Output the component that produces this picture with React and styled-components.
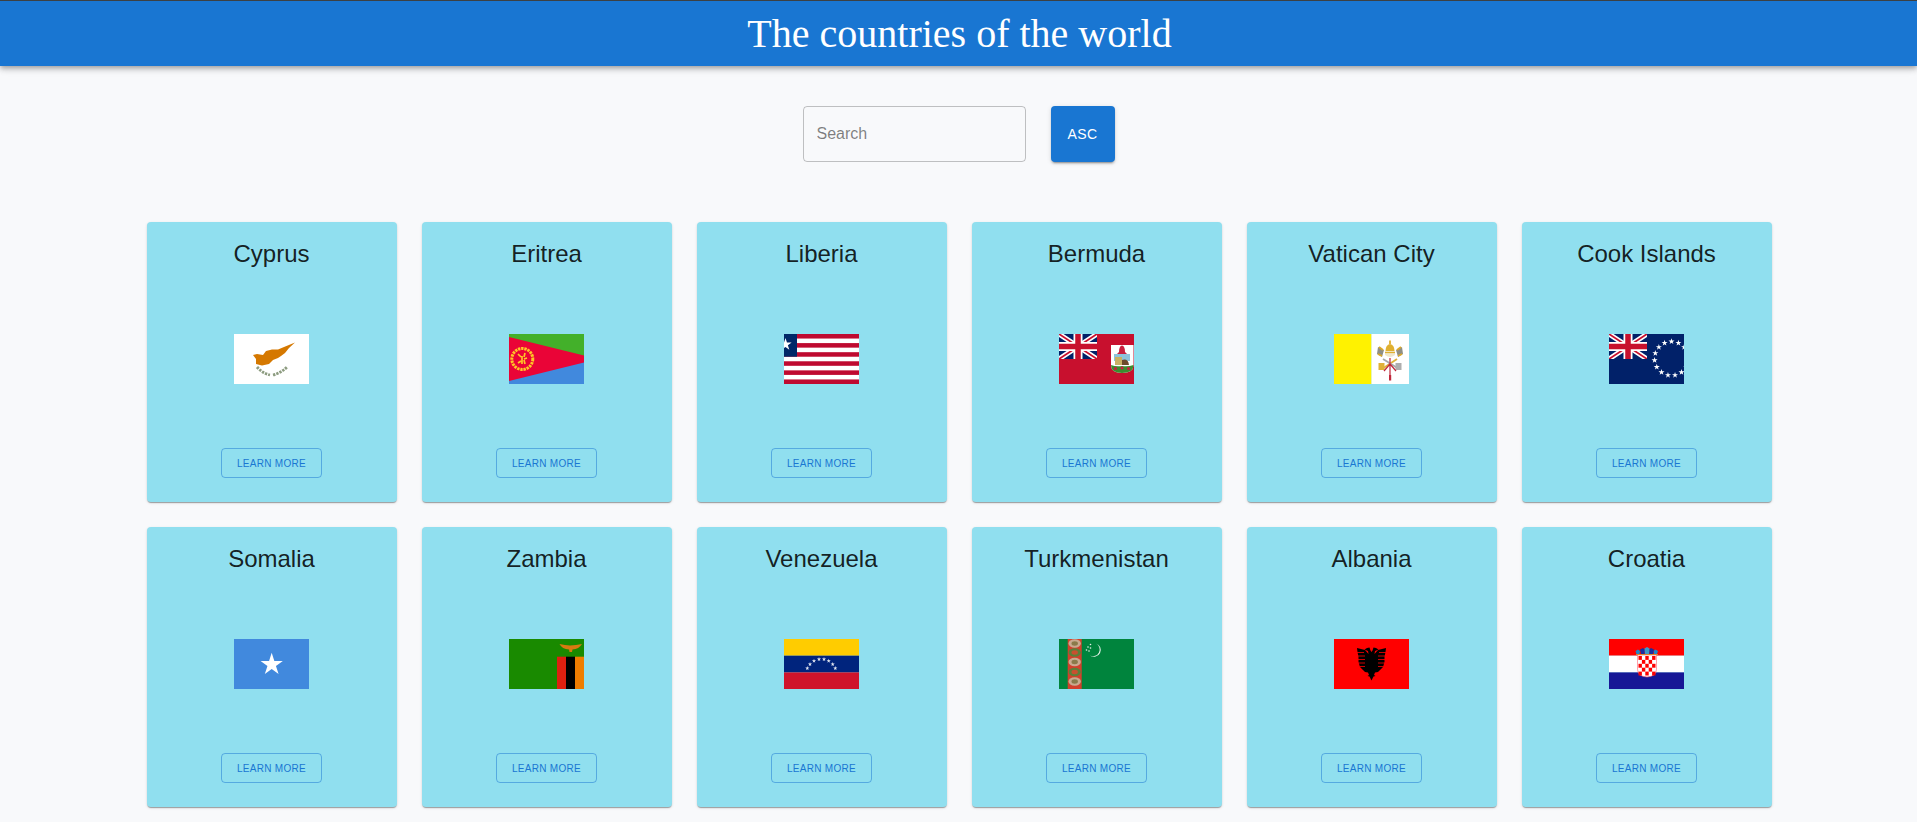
import React from "react";
import styled, { createGlobalStyle } from "styled-components";

//helpers for the flags
function starPoints(cx, cy, r, rot = -90) {
  const pts = [];
  for (let i = 0; i < 10; i++) {
    const rad = i % 2 === 0 ? r : r * 0.382;
    const a = ((rot + i * 36) * Math.PI) / 180;
    pts.push(`${(cx + rad * Math.cos(a)).toFixed(2)},${(cy + rad * Math.sin(a)).toFixed(2)}`);
  }
  return pts.join(" ");
}

function UnionJack() {
  return (
    <svg x="0" y="0" width="38" height="25" viewBox="0 0 38 25">
      <rect width="38" height="25" fill="#012169" />
      <path d="M0 0L38 25M38 0L0 25" stroke="#fff" strokeWidth="5" />
      <path d="M0 0L38 25M38 0L0 25" stroke="#c8102e" strokeWidth="1.8" />
      <path d="M19 0V25M0 12.500H38" stroke="#fff" strokeWidth="9" />
      <path d="M19 0V25M0 12.500H38" stroke="#c8102e" strokeWidth="5.500" />
    </svg>
  );
}

function Cyprus() {
  return (
    <>
      <rect width="75" height="50" fill="#fff" />
      <path
        d="M19 21L23 20L29 21L32 17L38 15.500L44 15.500L50 13L61 8.500L55 14L51 19L47 22L44 24L39 26L35 30L28 31.500L22 30L22 25Z"
        fill="#d57800"
      />
      <path
        d="M23 33Q28 39 36 41M39 41Q47 39 53 33"
        fill="none"
        stroke="#8d9c80"
        strokeWidth="2.800"
        strokeDasharray="2.400 1"
      />
    </>
  );
}

function Eritrea() {
  return (
    <>
      <rect width="75" height="25" fill="#43b02a" />
      <rect y="25" width="75" height="25" fill="#4189dd" />
      <polygon points="0,3 75,21.5 75,28.5 0,47" fill="#ea0437" />
      <circle cx="13.300" cy="25" r="10.500" fill="none" stroke="#ffc726" strokeWidth="3" strokeDasharray="2.400 .8" />
      <path d="M9 20l3 3M16 19l-1 4M18 24l-3 1M9 29l3-2M16 30l-1-4M13 22v8" stroke="#ffc726" strokeWidth="1.700" />
    </>
  );
}

function Liberia() {
  const stripes = Array.from({ length: 6 }, (_, i) => i * 2);
  return (
    <>
      <rect width="75" height="50" fill="#fff" />
      {stripes.map((i) => (
        <rect key={i} y={(i * 50) / 11} width="75" height={50 / 11} fill="#bf0a30" />
      ))}
      <rect width="13" height="22.700" fill="#002868" />
      <polygon points={starPoints(1.500, 10.500, 6.500)} fill="#fff" />
    </>
  );
}

function Bermuda() {
  return (
    <>
      <rect width="75" height="50" fill="#c8102e" />
      <UnionJack />
      <path d="M52 11H74.500V31Q74.500 39 63 39Q52 39 52 31Z" fill="#fff" />
      <path d="M60 18Q60 12 63 11.500Q66 12 66 18L68 20H58Z" fill="#c8203f" />
      <path d="M55 20H71V27H55Z" fill="#8cc4dc" />
      <path d="M56 23H63V31H56Z" fill="#c9b264" />
      <path d="M63 26Q69 24 70 31H63Z" fill="#6d4a2c" />
      <path d="M52 31Q57 33 63 32Q69 33 74.500 31Q74.500 39 63 39Q52 39 52 31Z" fill="#3c8d2f" />
      <circle cx="56.500" cy="34.500" r="1.600" fill="#c8203f" />
      <circle cx="63" cy="34" r="1.600" fill="#c8203f" />
      <circle cx="69.500" cy="34.500" r="1.600" fill="#c8203f" />
    </>
  );
}

function Vatican() {
  return (
    <>
      <rect width="37.500" height="50" fill="#fff200" />
      <rect x="37.500" width="37.500" height="50" fill="#fff" />
      <path d="M51.500 17Q51.500 11 56 10Q60.500 11 60.500 17Z" fill="#e0b030" />
      <path d="M56 6.500V10" stroke="#e0b030" strokeWidth="1.800" />
      <path d="M51 17H61V21Q56 25 51 21Z" fill="#f0e8cc" />
      <path d="M51 18.500H61" stroke="#e0b030" strokeWidth="1.200" />
      <path d="M44 13l6 3-2 7-5-3zM68 13l-6 3 2 7 5-3z" fill="#8f8f86" />
      <path d="M45 13l4 3M67 13l-4 3M44 20l4 2M68 20l-4 2" stroke="#dba92a" strokeWidth="1.800" />
      <path d="M63 25L48 35" stroke="#dfb138" strokeWidth="1.800" />
      <path d="M49 25L65 35" stroke="#a8a8a8" strokeWidth="1.800" />
      <rect x="44.500" y="29" width="6" height="7" fill="#dfb138" />
      <rect x="61.500" y="29" width="6" height="7" fill="#aeaeae" />
      <path d="M56 24V46M56 30L50 37M56 30L62 37" stroke="#c0283c" strokeWidth="1.200" fill="none" />
      <rect x="55" y="41" width="2.200" height="5.500" fill="#c0283c" />
    </>
  );
}

function CookIslands() {
  const stars = Array.from({ length: 15 }, (_, i) => {
    const a = ((i * 24 - 90) * Math.PI) / 180;
    return [62.5 + 17 * Math.cos(a), 24.5 + 17 * Math.sin(a)];
  });
  return (
    <>
      <rect width="75" height="50" fill="#012169" />
      <UnionJack />
      {stars.map(([x, y], i) => (
        <polygon key={i} points={starPoints(x, y, 3.200)} fill="#fff" />
      ))}
    </>
  );
}

function Somalia() {
  return (
    <>
      <rect width="75" height="50" fill="#4189dd" />
      <polygon points={starPoints(37.700, 25.500, 11.700)} fill="#fff" />
    </>
  );
}

function Zambia() {
  return (
    <>
      <rect width="75" height="50" fill="#198a00" />
      <rect x="48" y="17.700" width="9" height="32.300" fill="#de2010" />
      <rect x="57" y="17.700" width="9" height="32.300" fill="#000" />
      <rect x="66" y="17.700" width="9" height="32.300" fill="#ef7d00" />
      <path d="M50.500 5Q56 6 61 6.500Q67 6 73 5Q70 10 63.500 10.500L63 13H60.500L60 10.500Q53 10 50.500 5Z" fill="#d87a10" />
    </>
  );
}

function Venezuela() {
  const stars = [
    [23.3, 29.3],
    [26, 25.3],
    [30, 22],
    [35, 20.3],
    [40, 20.3],
    [44.7, 22],
    [48.7, 25.3],
    [51.3, 29.3],
  ];
  return (
    <>
      <rect width="75" height="16.700" fill="#ffcc00" />
      <rect y="16.700" width="75" height="16.700" fill="#00247d" />
      <rect y="33.400" width="75" height="16.600" fill="#cf142b" />
      {stars.map(([x, y], i) => (
        <polygon key={i} points={starPoints(x, y, 2.200)} fill="#e8ecf4" />
      ))}
    </>
  );
}

function Turkmenistan() {
  const guls = [4.5, 13.5, 23, 33, 42.5];
  return (
    <>
      <rect width="75" height="50" fill="#00843d" />
      <rect x="8.700" width="14" height="50" fill="#d2402c" />
      {guls.map((y, i) => (
        <g key={y}>
          <ellipse cx="15.700" cy={y} rx="6.200" ry="4.200" fill={i % 2 ? "#5c7f3a" : "#c9a98f"} />
          <ellipse cx="15.700" cy={y} rx="3.200" ry="2.200" fill={i % 2 ? "#c9502f" : "#8a7a4a"} />
        </g>
      ))}
      <path d="M37 4.500A6.800 6.800 0 1 1 31 16.500A5.800 5.800 0 0 0 37 4.500Z" fill="#e6f2ea" />
      {[
        [31.5, 5.5],
        [29, 8],
        [31.5, 9],
        [27.5, 11],
        [30, 12],
      ].map(([x, y]) => (
        <circle key={x + "-" + y} cx={x} cy={y} r="0.800" fill="#e6f2ea" />
      ))}
    </>
  );
}

function Albania() {
  return (
    <>
      <rect width="75" height="50" fill="#ff0000" />
      <path
        d="M33 9L30.500 10.500L34 12L34.500 15L31 11L23 9L23.500 13L24.500 18L24.500 23L26 28L29 31L31 33L34 33.500L35 36L33.500 37L35.500 37.500L37.500 41.500L39.500 37.500L41.500 37L40 36L41 33.500L44 33L46 31L49 28L50.500 23L50.500 18L51.500 13L52 9L44 11L40.500 15L41 12L44.500 10.500L42 9L39.500 8.500L38.500 11.500L37.500 13L36.500 11.500L35.500 8.500Z"
        fill="#000"
      />
      <path
        d="M23 13.500H30M23.500 17H31M23.500 20.500H31M24 24H31M25.500 27.500H31M52 13.500H45M51.500 17H44M51.500 20.500H44M51 24H44M49.500 27.500H44"
        stroke="#ff0000"
        strokeWidth=".8"
      />
    </>
  );
}

function Croatia() {
  const cells = [];
  for (let row = 0; row < 5; row++) {
    for (let col = 0; col < 5; col++) {
      if ((row + col) % 2 === 0) cells.push([col, row]);
    }
  }
  return (
    <>
      <rect width="75" height="16.700" fill="#ff0000" />
      <rect y="16.700" width="75" height="16.700" fill="#fff" />
      <rect y="33.400" width="75" height="16.600" fill="#171796" />
      <path d="M28.500 16H47.500V30Q47.500 37.500 38 38Q28.500 37.500 28.500 30Z" fill="#fff" stroke="#ff6070" strokeWidth=".6" />
      {cells.map(([c, r]) => (
        <rect key={c + "-" + r} x={29.5 + c * 3.4} y={17 + r * 3.9} width="3.400" height="3.900" fill="#ff0000" />
      ))}
      <path d="M26.500 12l2.500-1.500 2 1.500-.5 3H27.500zM44.500 12l2-1.500 2.500 1.500-1 3h-3z" fill="#1e88c8" />
      <path d="M31 10.500l3-1.500 2 1.500-.5 4.500h-3.500zM40 10.500l2-1.500 3 1.500-1 4.500h-3.500z" fill="#1a2da0" />
      <path d="M35.500 9.500l2.500-1.500 2.500 1.500-.5 5.500h-4z" fill="#3c9ac8" />
      <path d="M27 15.500H49" stroke="#d8a030" strokeWidth=".8" />
    </>
  );
}

const countries = [
  { name: "Cyprus", flag: Cyprus },
  { name: "Eritrea", flag: Eritrea },
  { name: "Liberia", flag: Liberia },
  { name: "Bermuda", flag: Bermuda },
  { name: "Vatican City", flag: Vatican },
  { name: "Cook Islands", flag: CookIslands },
  { name: "Somalia", flag: Somalia },
  { name: "Zambia", flag: Zambia },
  { name: "Venezuela", flag: Venezuela },
  { name: "Turkmenistan", flag: Turkmenistan },
  { name: "Albania", flag: Albania },
  { name: "Croatia", flag: Croatia },
];

function App() {
  return (
    <>
      <GlobalStyle />
      <Header>
        <Title>The countries of the world</Title>
      </Header>
      <Controls>
        <SearchInput placeholder="Search" />
        <SortButton>ASC</SortButton>
      </Controls>
      <Grid>
        {countries.map(({ name, flag: Flag }) => (
          <Card key={name}>
            <CountryName>{name}</CountryName>
            <FlagImage viewBox="0 0 75 50">
              <Flag />
            </FlagImage>
            <LearnMore>Learn More</LearnMore>
          </Card>
        ))}
      </Grid>
    </>
  );
}

//styling
const GlobalStyle = createGlobalStyle`
  html, body {
    margin: 0;
    height: 100%;
    overflow: hidden;
    background: #f8f9fb;
    font-family: "Liberation Sans", Arial, sans-serif;
  }
  * {
    box-sizing: border-box;
  }
`;
const Header = styled.header`
  height: 66px;
  background: #1976d2;
  border-top: 1px solid #3c4043;
  display: flex;
  justify-content: center;
  box-shadow: 0 2px 4px -1px rgba(0, 0, 0, 0.2), 0 4px 5px rgba(0, 0, 0, 0.14),
    0 1px 10px rgba(0, 0, 0, 0.12);
`;
const Title = styled.h1`
  margin: 0;
  padding: 1px 0 0 2px;
  color: #fff;
  font-family: "Liberation Serif", "Times New Roman", serif;
  font-size: 40px;
  font-weight: 400;
  line-height: 64px;
`;
const Controls = styled.div`
  display: flex;
  justify-content: center;
  gap: 25px;
  margin-top: 40px;
`;
const SearchInput = styled.input`
  width: 223px;
  height: 56px;
  padding: 0 13px;
  border: 1px solid rgba(0, 0, 0, 0.23);
  border-radius: 4px;
  background: transparent;
  font-family: "Liberation Sans", Arial, sans-serif;
  font-size: 16px;
  outline: none;
  &::placeholder {
    color: rgba(0, 0, 0, 0.5);
  }
`;
const SortButton = styled.button`
  width: 64px;
  height: 56px;
  border: 0;
  border-radius: 4px;
  background: #1976d2;
  color: #fff;
  font-family: "Liberation Sans", Arial, sans-serif;
  font-size: 14px;
  font-weight: 500;
  letter-spacing: 0.02857em;
  box-shadow: 0 3px 1px -2px rgba(0, 0, 0, 0.2), 0 2px 2px rgba(0, 0, 0, 0.14),
    0 1px 5px rgba(0, 0, 0, 0.12);
`;
const Grid = styled.main`
  display: grid;
  grid-template-columns: repeat(6, 250px);
  justify-content: center;
  gap: 25px;
  margin-top: 60px;
  padding-left: 1px;
`;
const Card = styled.article`
  height: 280px;
  padding: 16px 0 24px;
  display: flex;
  flex-direction: column;
  align-items: center;
  border-radius: 4px;
  background: #90dfef;
  box-shadow: 0 2px 1px -1px rgba(0, 0, 0, 0.2), 0 1px 1px rgba(0, 0, 0, 0.14),
    0 1px 3px rgba(0, 0, 0, 0.12);
`;
const CountryName = styled.h2`
  margin: 0;
  height: 32px;
  color: rgba(0, 0, 0, 0.87);
  font-size: 24px;
  font-weight: 400;
  line-height: 32px;
`;
const FlagImage = styled.svg`
  display: block;
  width: 75px;
  height: 50px;
  margin-top: 64px;
`;
const LearnMore = styled.button`
  width: 101px;
  height: 30px;
  margin-top: 64px;
  padding: 0;
  border: 1px solid rgba(25, 118, 210, 0.5);
  border-radius: 4px;
  background: transparent;
  color: #1976d2;
  font-family: "Liberation Sans", Arial, sans-serif;
  font-size: 10px;
  font-weight: 500;
  letter-spacing: 0.02857em;
  text-transform: uppercase;
`;
export default App;
